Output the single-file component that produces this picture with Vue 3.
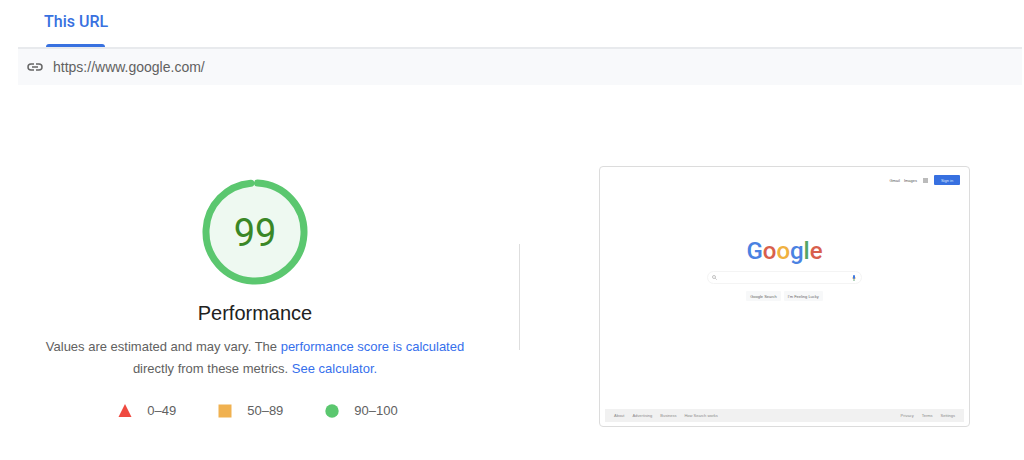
<script setup>
const ranges = [
  { label: '0–49', shape: 'triangle' },
  { label: '50–89', shape: 'square' },
  { label: '90–100', shape: 'circle' }
]
const letters = [
  { char: 'G', tone: 'blue' },
  { char: 'o', tone: 'red' },
  { char: 'o', tone: 'yellow' },
  { char: 'g', tone: 'blue' },
  { char: 'l', tone: 'green' },
  { char: 'e', tone: 'red' }
]
const footerLeft = ['About', 'Advertising', 'Business', 'How Search works']
const footerRight = ['Privacy', 'Terms', 'Settings']
</script>

<template>
  <main class="page">
    <header class="top">
      <nav class="tabs" role="tablist">
        <button class="tab" type="button" role="tab" aria-selected="true">This URL</button>
      </nav>
      <div class="url-bar">
        <svg class="link-icon" viewBox="0 0 16 8" aria-hidden="true">
          <path d="M7 1H4a3 3 0 0 0 0 6h3M9 1h3a3 3 0 0 1 0 6H9M5 4h6" />
        </svg>
        <span>https://www.google.com/</span>
      </div>
    </header>

    <section class="report">
      <div class="score">
        <svg class="gauge" viewBox="0 0 106 106" role="img" aria-label="Performance score 99">
          <circle class="gauge-fill" cx="53" cy="53" r="49" />
          <circle class="gauge-arc" cx="53" cy="53" r="49" pathLength="100" stroke-dasharray="97.8 2.2" transform="rotate(-87 53 53)" />
          <text class="gauge-text" x="53" y="67" text-anchor="middle">99</text>
        </svg>
        <h1 class="title">Performance</h1>
        <p class="note">
          Values are estimated and may vary. The <a href="#score">performance score is calculated</a><br />
          directly from these metrics. <a href="#calculator">See calculator.</a>
        </p>
        <ul class="legend">
          <li v-for="r in ranges" :key="r.label">
            <svg class="mark" :class="r.shape" viewBox="0 0 14 14" aria-hidden="true">
              <path v-if="r.shape === 'triangle'" d="M7 0l6.500 13H.5z" />
              <rect v-else-if="r.shape === 'square'" x="0.500" y="0.500" width="13" height="13" />
              <circle v-else cx="7" cy="7" r="6.700" />
            </svg>
            <span>{{ r.label }}</span>
          </li>
        </ul>
      </div>

      <div class="divider"></div>

      <div class="preview">
        <div class="shot">
          <div class="shot-top">
            <a href="#gmail">Gmail</a>
            <a href="#images">Images</a>
            <svg class="apps" viewBox="0 0 5 5" aria-hidden="true">
              <path d="M0 0h5v5H0z" />
            </svg>
            <button class="signin" type="button">Sign in</button>
          </div>
          <div class="logo">
            <span v-for="(l, i) in letters" :key="i" :class="l.tone">{{ l.char }}</span>
          </div>
          <div class="search">
            <svg class="lens" viewBox="0 0 5 5" aria-hidden="true">
              <circle cx="2" cy="2" r="1.500" /><path d="M3.200 3.200L4.700 4.700" />
            </svg>
            <input type="text" aria-label="Search" />
            <svg class="mic" viewBox="0 0 4 6" aria-hidden="true">
              <path d="M.5 2.500a1.500 1.500 0 0 0 3 0" fill="none" stroke="#eeb35c" stroke-width=".8" />
              <rect x="1" y="0" width="2" height="4" rx="1" fill="#4079e0" />
              <path d="M1.500 4.200h1V6h-1z" fill="#67a878" />
            </svg>
          </div>
          <div class="actions">
            <button type="button">Google Search</button>
            <button type="button">I'm Feeling Lucky</button>
          </div>
          <footer class="shot-footer">
            <nav><a v-for="t in footerLeft" :key="t" href="#footer">{{ t }}</a></nav>
            <nav><a v-for="t in footerRight" :key="t" href="#footer">{{ t }}</a></nav>
          </footer>
        </div>
      </div>
    </section>
  </main>
</template>

<style>
body {
  background: #fff;
}
</style>

<style scoped>
.page {
  font-family: "Liberation Sans", Arial, sans-serif;
  color: #616161;
  font-size: 13px;
}
button {
  font-family: inherit;
  border: 0;
  padding: 0;
}
a {
  text-decoration: none;
}
.top {
  margin: 0 2px 0 18px;
}
.tabs {
  display: flex;
  padding-left: 26px;
  border-bottom: 2px solid #e8eaed;
}
.tab {
  position: relative;
  height: 47px;
  padding-bottom: 4px;
  background: none;
  color: #3871e0;
  font: 500 16px/20px Roboto, sans-serif;
}
.tab::after {
  content: "";
  position: absolute;
  left: 2px;
  right: 3px;
  bottom: 0;
  height: 3px;
  border-radius: 3px 3px 0 0;
  background: #3871e0;
}
.url-bar {
  display: flex;
  align-items: center;
  gap: 10px;
  height: 36px;
  padding-left: 9px;
  background: #f8f9fb;
  font-size: 14px;
}
.link-icon {
  width: 16px;
  height: 8px;
  fill: none;
  stroke: #666;
  stroke-width: 1.500;
}
.report {
  display: grid;
  grid-template-columns: minmax(0, 519fr) 1px minmax(0, 504fr);
  padding-top: 81px;
}
.score {
  display: flex;
  flex-direction: column;
  align-items: center;
  padding: 13px 9px 0 0;
}
.gauge {
  width: 106px;
  height: 106px;
}
.gauge-fill {
  fill: #eef9f1;
}
.gauge-arc {
  fill: none;
  stroke: #5bc76f;
  stroke-width: 7;
  stroke-linecap: round;
}
.gauge-text {
  fill: #3a8726;
  font: 38px Roboto, sans-serif;
}
.title {
  margin: 16px 0 0;
  color: #212121;
  font-size: 20px;
  font-weight: 400;
  line-height: 24px;
}
.note {
  margin: 11px 0 0;
  line-height: 22px;
  text-align: center;
  white-space: nowrap;
}
.note a {
  color: #366fec;
}
.legend {
  display: flex;
  gap: 42px;
  margin: 20px 0 0;
  padding: 0 0 0 6px;
  list-style: none;
}
.legend li {
  display: flex;
  align-items: center;
  gap: 15px;
  line-height: 22px;
}
.mark {
  width: 14px;
  height: 14px;
}
.triangle {
  fill: #ef4a40;
}
.square {
  fill: #f0b150;
}
.circle {
  fill: #5bc76f;
}
.divider {
  align-self: start;
  height: 106px;
  margin-top: 78px;
  background: #dedede;
}
.preview {
  padding: 0 54px 0 79px;
}
.shot {
  display: flex;
  flex-direction: column;
  align-items: center;
  box-sizing: border-box;
  min-height: 261px;
  padding: 8px 5px 4px;
  border: 1px solid #dcdcdc;
  border-radius: 4px;
  font-size: 4px;
}
.shot-top {
  display: flex;
  align-self: stretch;
  align-items: center;
  justify-content: flex-end;
  gap: 4px;
  height: 10px;
  padding-right: 4px;
}
.shot-top a {
  color: #555;
}
.apps {
  width: 5px;
  height: 5px;
  margin: 0 2px;
  fill: #bbb;
}
.signin {
  width: 26px;
  height: 10px;
  border-radius: 1px;
  background: #3770e0;
  color: #dce8ff;
  font-size: 4px;
}
.logo {
  margin-top: 48px;
  font: 500 24px/36px Roboto, sans-serif;
}
.blue {
  color: #4a82e2;
}
.red {
  color: #d8604c;
}
.yellow {
  color: #f0b140;
}
.green {
  color: #52a565;
}
.search {
  display: flex;
  align-items: center;
  box-sizing: border-box;
  width: 43%;
  height: 13px;
  margin-top: 2px;
  padding: 0 5px 0 4px;
  border: 1px solid #f4f4f4;
  border-radius: 7px;
}
.search input {
  flex: 1;
  min-width: 0;
  height: 8px;
  padding: 0;
  border: 0;
  outline: 0;
  background: none;
  font-size: 4px;
}
.lens {
  width: 5px;
  height: 5px;
  fill: none;
  stroke: #aaa;
  stroke-width: 0.700;
}
.mic {
  width: 4px;
  height: 6px;
}
.actions {
  display: flex;
  gap: 3px;
  margin-top: 7px;
}
.actions button {
  height: 10px;
  padding: 0 4px;
  border-radius: 1px;
  background: #f7f8f9;
  color: #666;
  font-size: 4px;
}
.shot-footer {
  display: flex;
  align-self: stretch;
  justify-content: space-between;
  margin-top: auto;
  padding: 0 9px;
  background: #f1f1f1;
  line-height: 13px;
}
.shot-footer nav {
  display: flex;
  gap: 8px;
}
.shot-footer a {
  color: #8b8b8b;
}
</style>
